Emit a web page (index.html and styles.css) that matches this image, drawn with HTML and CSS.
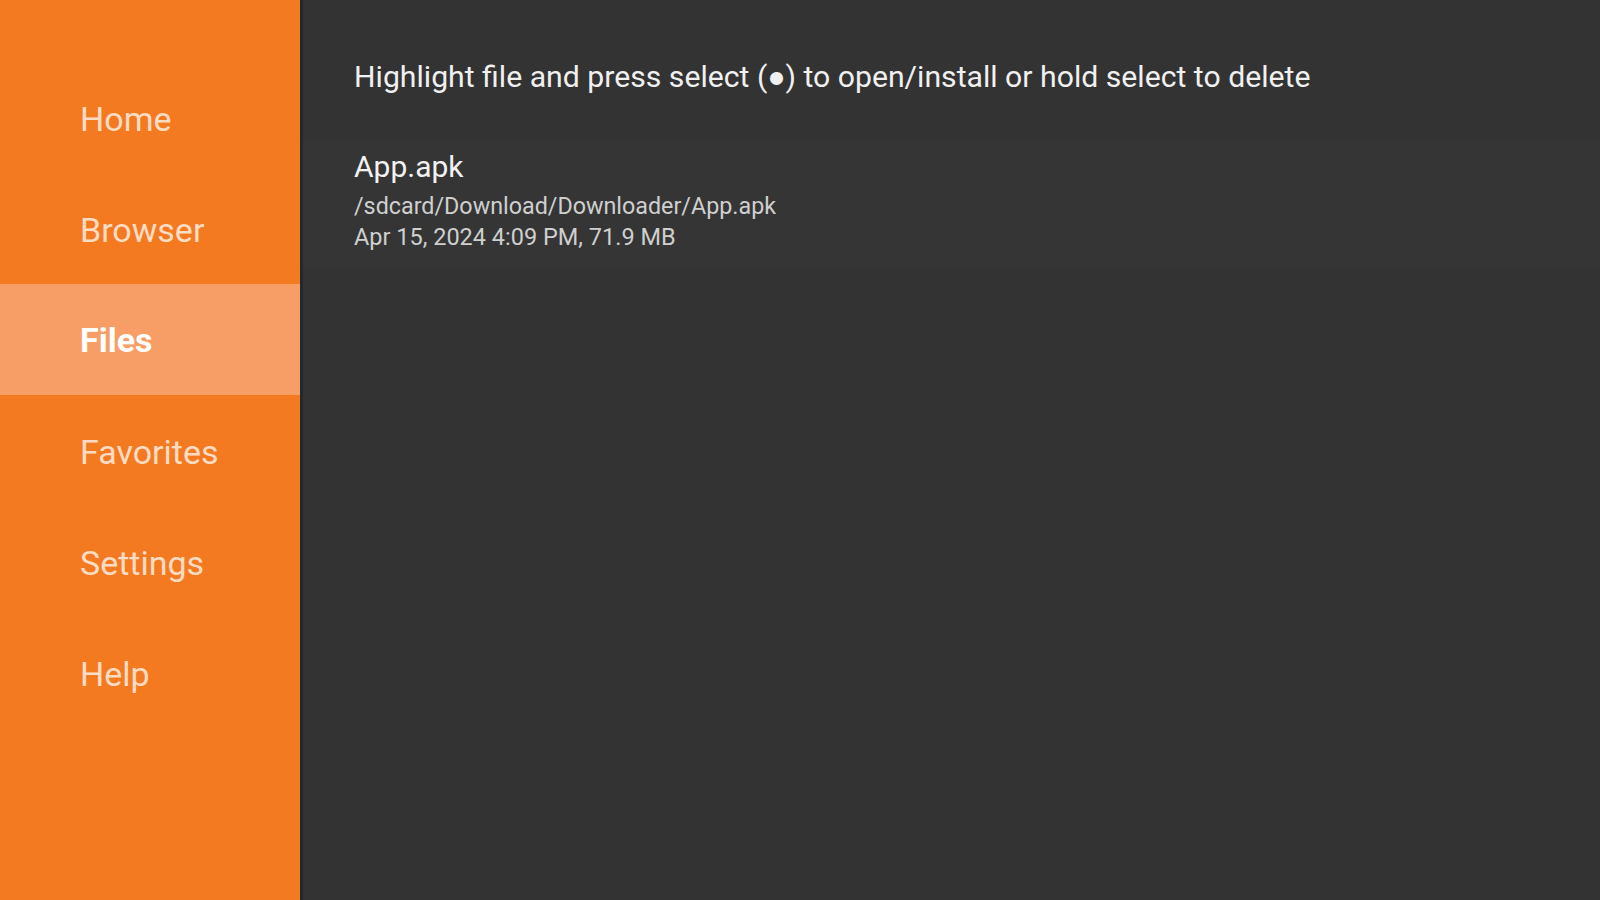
FILE: index.html
```html
<!DOCTYPE html>
<html>
<head>
<meta charset="utf-8">
<link rel="stylesheet" href="styles.css">
</head>
<body>
<div class="app">
  <nav class="sidebar">
    <div class="nav-item">Home</div>
    <div class="nav-item">Browser</div>
    <div class="nav-item active">Files</div>
    <div class="nav-item">Favorites</div>
    <div class="nav-item">Settings</div>
    <div class="nav-item">Help</div>
  </nav>
  <main class="content">
    <div class="hint">Highlight file and press select (&#x25CF;) to open/install or hold select to delete</div>
    <div class="file-row">
      <div class="file-name">App.apk</div>
      <div class="file-path">/sdcard/Download/Downloader/App.apk</div>
      <div class="file-meta">Apr 15, 2024 4:09 PM, 71.9 MB</div>
    </div>
  </main>
</div>
</body>
</html>
```
FILE: styles.css
```css
html, body {
  margin: 0;
  padding: 0;
  width: 1600px;
  height: 900px;
  overflow: hidden;
  background: #333333;
  font-family: Roboto, "Noto Sans", sans-serif;
}
.app {
  display: flex;
  width: 1600px;
  height: 900px;
}
.sidebar {
  width: 300px;
  flex: none;
  background: #f47a22;
  border-right: 3px solid #1f2a30;
  padding-top: 63px;
  box-sizing: content-box;
  display: flex;
  flex-direction: column;
}
.nav-item {
  height: 111px;
  display: flex;
  align-items: center;
  padding-left: 80px;
  font-size: 34px;
  color: #fddcc4;
}
.nav-item.active {
  margin-top: -1px;
  margin-bottom: 1px;
  background: #f69e65;
  color: #ffffff;
  font-weight: 700;
}
.content {
  flex: 1;
  padding-left: 51px;
  display: flex;
  flex-direction: column;
}
.hint {
  padding-top: 57px;
  line-height: 40px;
  font-size: 30.2px;
  color: #f0f0f0;
}
.file-row {
  margin-top: 43px;
  margin-left: -51px;
  padding: 11px 0 15px 51px;
  background: #353535;
}
.file-name {
  font-size: 30px;
  line-height: 32px;
  color: #f2f2f2;
}
.file-path {
  margin-top: 8px;
  font-size: 23.3px;
  line-height: 30px;
  color: #cfcfcf;
}
.file-meta {
  font-size: 23.5px;
  line-height: 32px;
  color: #cfcfcf;
}
```
